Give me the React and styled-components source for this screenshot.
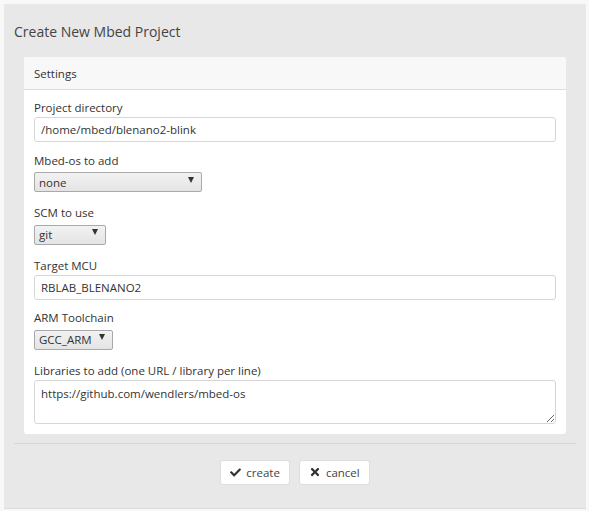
import React from "react"
import styled, { createGlobalStyle } from "styled-components"
import { FaCheck, FaTimes } from "react-icons/fa"

const GlobalStyle = createGlobalStyle`
  html, body {
    margin: 0;
    padding: 0;
    background: #f8f8f8;
    font-family: "Open Sans", "DejaVu Sans", sans-serif;
    color: #333;
  }
`

export default function App() {
  return (
    <>
      <GlobalStyle />
      <Panel>
        <Title>Create New Mbed Project</Title>
        <Card>
          <CardHeader>Settings</CardHeader>
          <CardBody>
            <Field>
              <Label>Project directory</Label>
              <TextInput defaultValue="/home/mbed/blenano2-blink" />
            </Field>
            <Field>
              <Label>Mbed-os to add</Label>
              <SelectWrap width={168}>
                <Select defaultValue="none">
                  <option value="none">none</option>
                </Select>
              </SelectWrap>
            </Field>
            <Field>
              <Label>SCM to use</Label>
              <SelectWrap width={72}>
                <Select defaultValue="git">
                  <option value="git">git</option>
                </Select>
              </SelectWrap>
            </Field>
            <Field>
              <Label>Target MCU</Label>
              <TextInput defaultValue="RBLAB_BLENANO2" />
            </Field>
            <Field>
              <Label>ARM Toolchain</Label>
              <SelectWrap width={79}>
                <Select defaultValue="GCC_ARM">
                  <option value="GCC_ARM">GCC_ARM</option>
                </Select>
              </SelectWrap>
            </Field>
            <LastField>
              <Label>Libraries to add (one URL / library per line)</Label>
              <TextArea defaultValue="https://github.com/wendlers/mbed-os" />
            </LastField>
          </CardBody>
        </Card>
        <Footer>
          <Button>
            <FaCheck size={11} />
            create
          </Button>
          <Button>
            <FaTimes size={12} />
            cancel
          </Button>
        </Footer>
      </Panel>
    </>
  )
}

const Panel = styled.div`
  margin: 4px 3px 0 4px;
  height: 505px;
  background: #e8e8e8;
  border-bottom: 1px solid #dcdcdc;
  padding: 0 10px;
  box-sizing: border-box;
`

const Title = styled.h2`
  margin: 0;
  padding: 17px 0 0 0;
  height: 53px;
  box-sizing: border-box;
  font-size: 14px;
  font-weight: normal;
  color: #444;
  line-height: 22px;
`

const Card = styled.div`
  margin: 0 10px;
  background: #fff;
  border-radius: 3px;
  overflow: hidden;
`

const CardHeader = styled.div`
  height: 32px;
  line-height: 33px;
  padding-left: 10px;
  background: #f8f8f8;
  border-bottom: 1px solid #ddd;
  font-size: 11.5px;
  color: #333;
`

const CardBody = styled.div`
  padding: 10px 10px 10px;
`

const Field = styled.div`
  height: 52.5px;
  display: flex;
  flex-direction: column;
  align-items: flex-start;
`

const LastField = styled(Field)`
  height: auto;
`

const Label = styled.label`
  font-size: 11.5px;
  line-height: 16px;
  margin-bottom: 1px;
  color: #333;
`

const TextInput = styled.input`
  width: 100%;
  height: 25px;
  box-sizing: border-box;
  border: 1px solid #d6d6d6;
  border-radius: 3px;
  padding: 0 6px;
  font-family: inherit;
  font-size: 11.5px;
  color: #333;
  background: #fff;
  outline: none;
`

const SelectWrap = styled.div`
  position: relative;
  width: ${(p) => p.width}px;
  height: 20px;

  &::after {
    content: "";
    position: absolute;
    right: 8px;
    top: 7px;
    width: 0;
    height: 0;
    border-left: 3px solid transparent;
    border-right: 3px solid transparent;
    border-top: 6px solid #333;
    pointer-events: none;
  }
`

const Select = styled.select`
  appearance: none;
  width: 100%;
  height: 100%;
  box-sizing: border-box;
  border: 1px solid #a9a9a9;
  border-radius: 2px;
  background: linear-gradient(#f2f2f2, #e4e4e4);
  padding: 0 14px 0 4px;
  font-family: inherit;
  font-size: 11.5px;
  color: #333;
  outline: none;
`

const TextArea = styled.textarea`
  width: 100%;
  height: 44px;
  box-sizing: border-box;
  border: 1px solid #d6d6d6;
  border-radius: 3px;
  padding: 5px 6px;
  font-family: inherit;
  font-size: 11.5px;
  line-height: 16px;
  color: #333;
  resize: vertical;
  outline: none;
  display: block;
`

const Footer = styled.div`
  margin-top: 9px;
  border-top: 1px solid #d6d6d6;
  padding-top: 16px;
  display: flex;
  justify-content: center;
  gap: 9px;
`

const Button = styled.button`
  display: flex;
  align-items: center;
  gap: 5px;
  height: 25px;
  padding: 0 9px;
  background: #fff;
  border: 1px solid #ddd;
  border-radius: 3px;
  font-family: inherit;
  font-size: 11.5px;
  color: #444;
  cursor: pointer;

  svg {
    color: #333;
  }
`
